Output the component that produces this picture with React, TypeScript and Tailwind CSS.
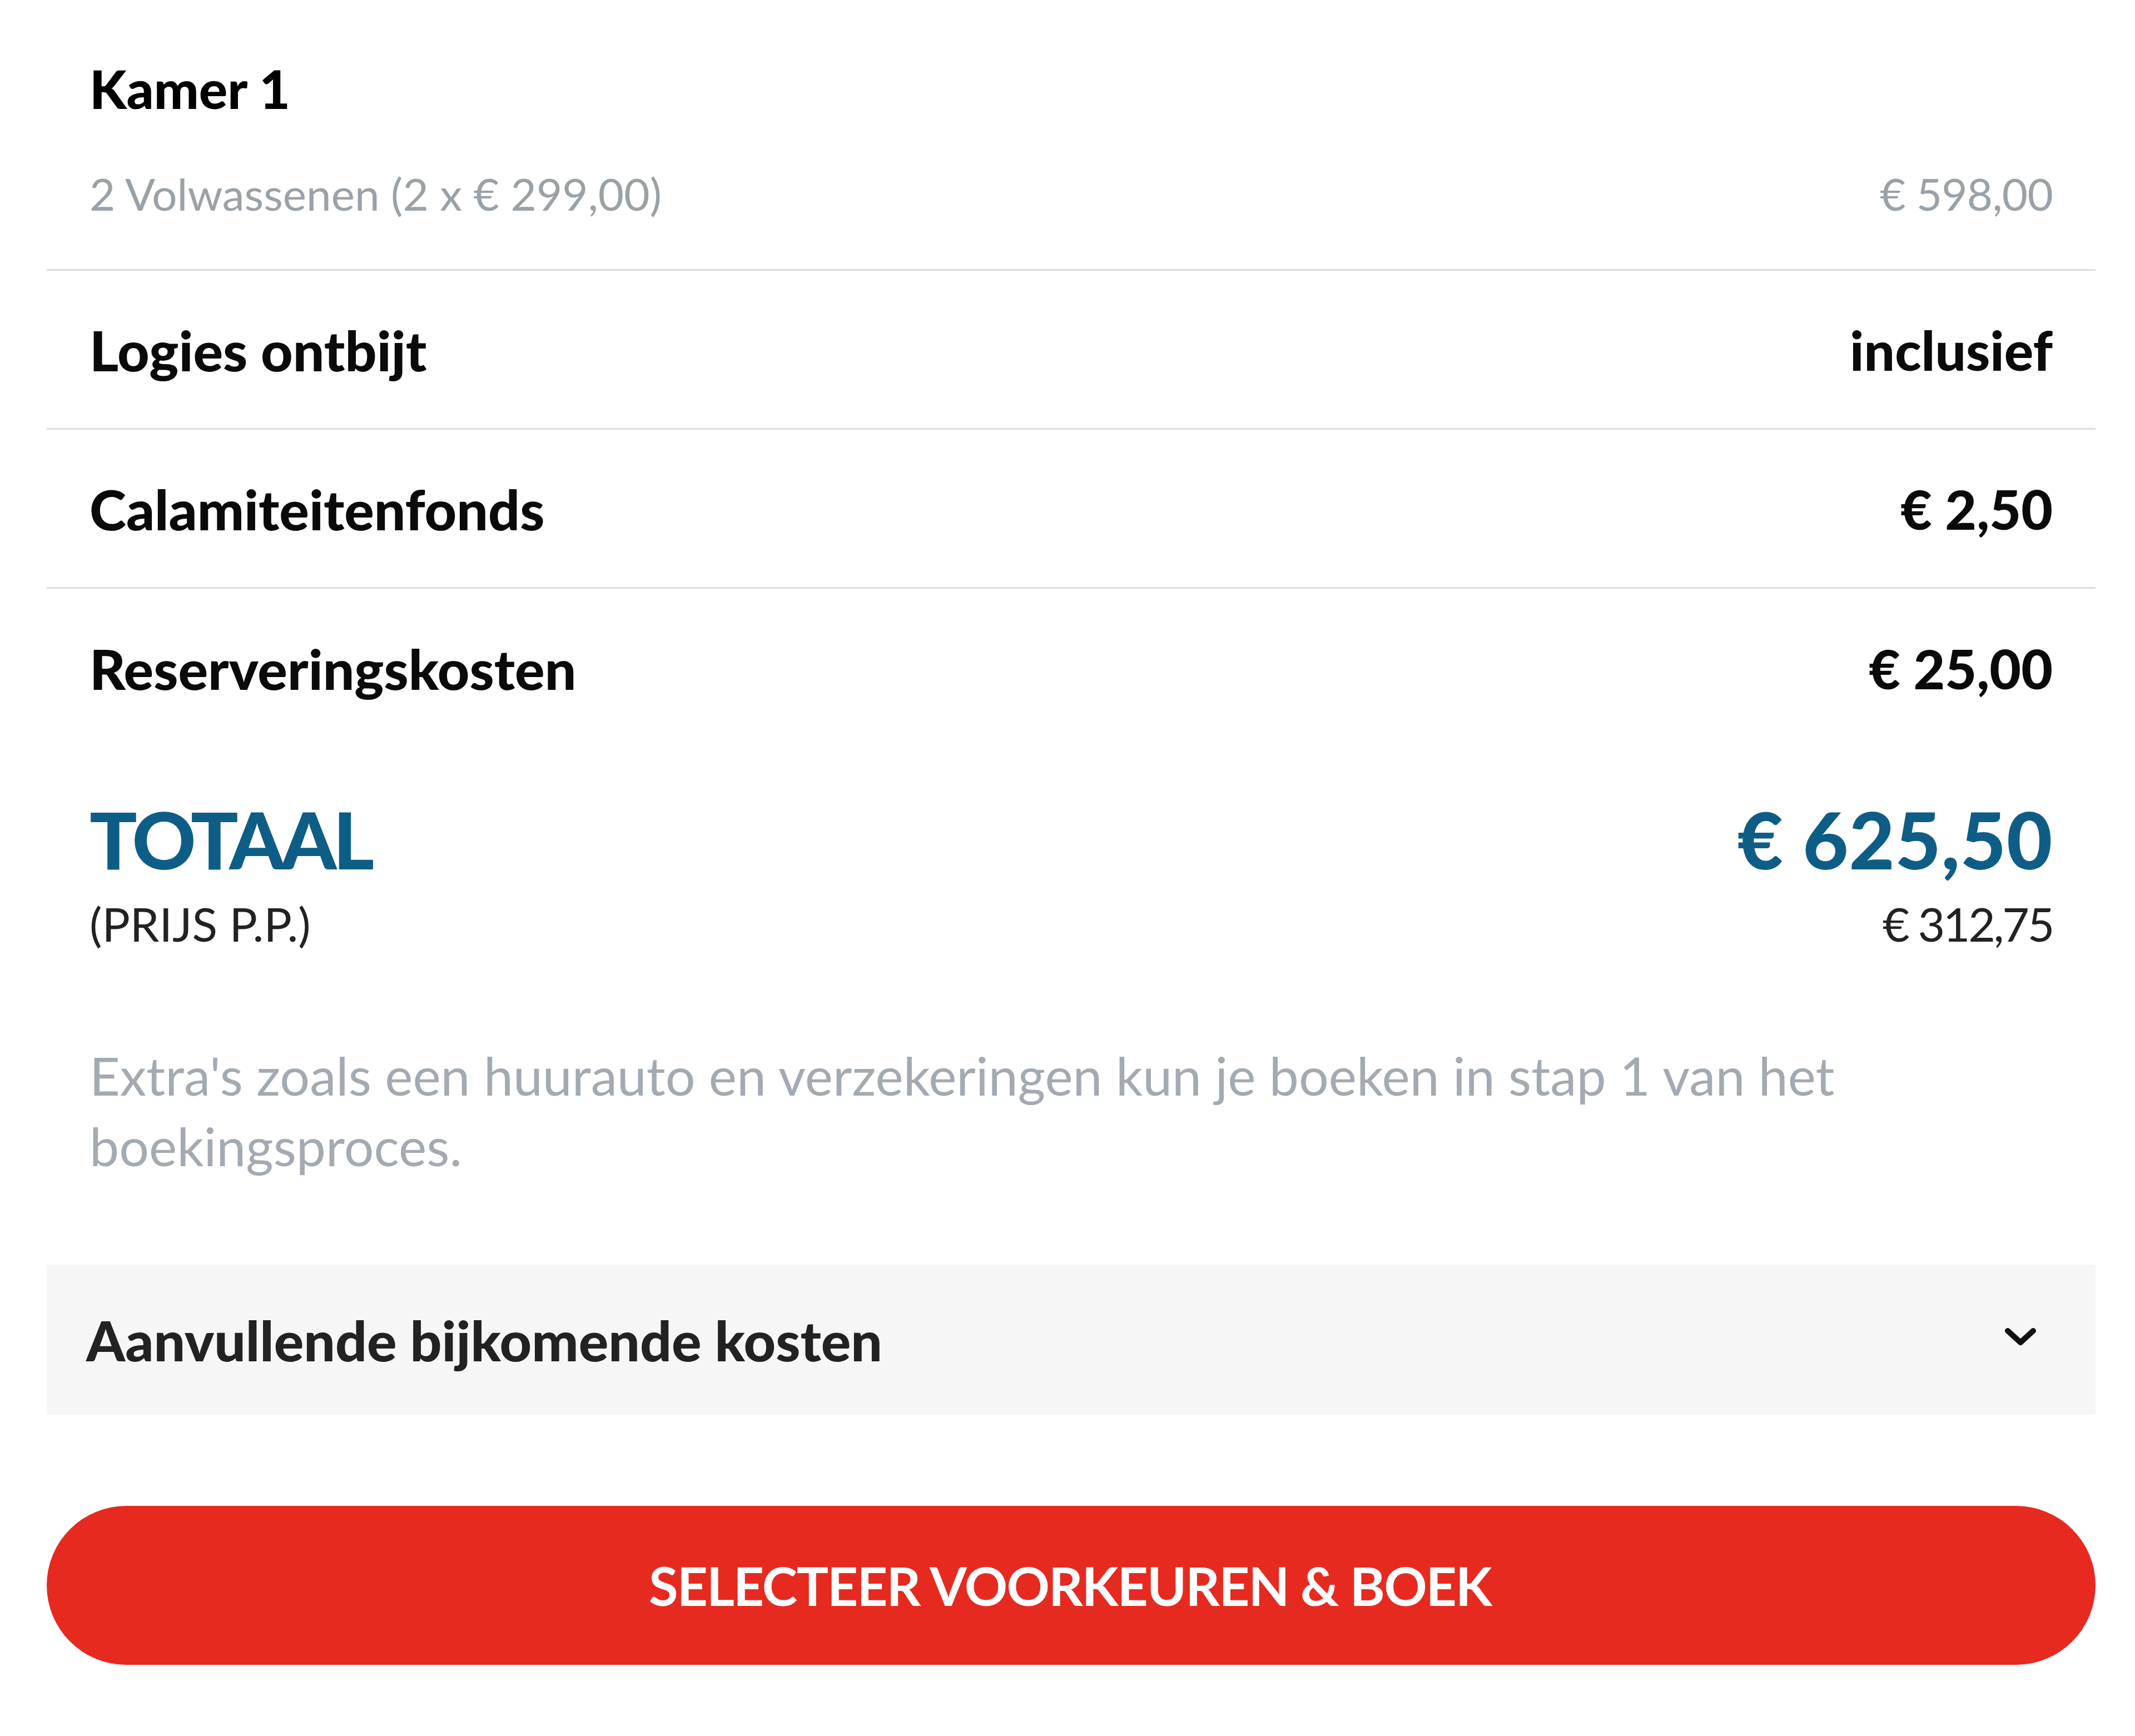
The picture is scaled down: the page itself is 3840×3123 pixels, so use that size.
import React from "react";

const font = { fontFamily: "Lato, 'Noto Sans', sans-serif" };

function Row({ label, value, border }: { label: string; value: string; border?: boolean }) {
  return (
    <div
      className={`flex h-[286px] items-center justify-between px-[77px] ${
        border ? "border-b-[3px] border-[#dddddd]" : ""
      }`}
    >
      <span className="text-[100px] font-black leading-none text-[#0a0a0a]">{label}</span>
      <span className="text-[98px] font-black leading-none text-[#0a0a0a]">{value}</span>
    </div>
  );
}

export default function App() {
  return (
    <div className="min-h-[3123px] w-full bg-white pl-[84px] pr-[71px]" style={font}>
      <div className="border-b-[3px] border-[#dddddd] px-[77px] pt-[111px] pb-[96px]">
        <div className="text-[96px] font-black leading-none text-black">Kamer 1</div>
        <div className="mt-[101px] flex justify-between text-[80px] leading-none text-[#9aa1a7]">
          <span>2 Volwassenen (2 x € 299,00)</span>
          <span className="tracking-[-0.01em]">€ 598,00</span>
        </div>
      </div>
      <Row label="Logies ontbijt" value="inclusief" border />
      <Row label="Calamiteitenfonds" value="€ 2,50" border />
      <Row label="Reserveringskosten" value="€ 25,00" />

      <div className="mt-[93px] px-[77px]">
        <div className="flex items-start justify-between text-[142px] font-black leading-none text-[#0e5d86]">
          <span className="tracking-[-0.045em]">TOTAAL</span>
          <span className="tracking-[0.005em]">€ 625,50</span>
        </div>
        <div className="mt-[40px] flex justify-between text-[84px] leading-none text-[#222222]">
          <span>(PRIJS P.P.)</span>
          <span className="tracking-[-0.04em]">€ 312,75</span>
        </div>
        <p className="mt-[167px] text-[95px] leading-[127px] text-[#a3aab1]">
          Extra's zoals een huurauto en verzekeringen kun je boeken in stap 1 van het boekingsproces.
        </p>
      </div>

      <div className="mt-[150px] flex h-[270px] items-center justify-between bg-[#f6f6f6] pl-[71px] pr-[106px]">
        <span className="text-[100px] font-black leading-none text-[#222222]">Aanvullende bijkomende kosten</span>
        <svg width="58" height="34" viewBox="0 0 58 34" className="-mt-[10px]">
          <path d="M6 6 L29 27 L52 6" fill="none" stroke="#111" strokeWidth="10" strokeLinecap="round" strokeLinejoin="round" />
        </svg>
      </div>

      <button className="mt-[164px] flex h-[286px] w-full items-center justify-center rounded-full bg-[#e62a20] pr-[4px]">
        <span className="text-[96px] font-bold leading-none tracking-[-0.02em] text-white">
          SELECTEER VOORKEUREN &amp; BOEK
        </span>
      </button>
    </div>
  );
}
